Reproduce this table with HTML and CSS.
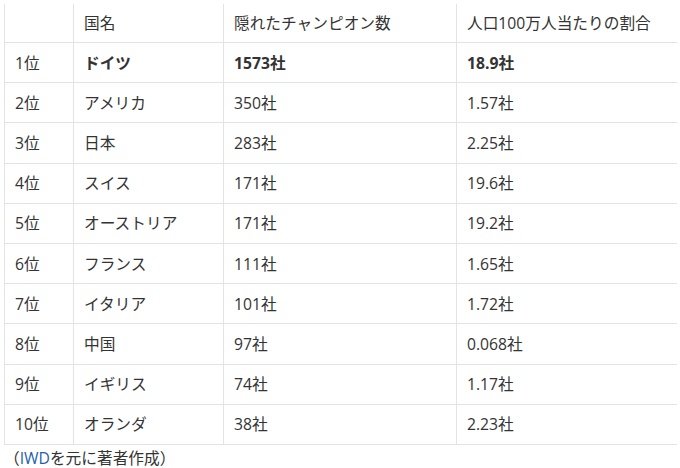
FILE: index.html
```html
<!DOCTYPE html>
<html lang="ja">
<head>
<meta charset="utf-8">
<link rel="stylesheet" href="styles.css">
</head>
<body>
<div class="wrap">
<table class="rank">
<thead>
<tr><th class="c1"></th><th class="c2">国名</th><th class="c3">隠れたチャンピオン数</th><th class="c4">人口100万人当たりの割合</th></tr>
</thead>
<tbody>
<tr class="bold"><td>1位</td><td>ドイツ</td><td>1573社</td><td>18.9社</td></tr>
<tr><td>2位</td><td>アメリカ</td><td>350社</td><td>1.57社</td></tr>
<tr><td>3位</td><td>日本</td><td>283社</td><td>2.25社</td></tr>
<tr><td>4位</td><td>スイス</td><td>171社</td><td>19.6社</td></tr>
<tr><td>5位</td><td>オーストリア</td><td>171社</td><td>19.2社</td></tr>
<tr><td>6位</td><td>フランス</td><td>111社</td><td>1.65社</td></tr>
<tr><td>7位</td><td>イタリア</td><td>101社</td><td>1.72社</td></tr>
<tr><td>8位</td><td>中国</td><td>97社</td><td>0.068社</td></tr>
<tr><td>9位</td><td>イギリス</td><td>74社</td><td>1.17社</td></tr>
<tr><td>10位</td><td>オランダ</td><td>38社</td><td>2.23社</td></tr>
</tbody>
</table>
<p class="note">（<span class="link">IWD</span>を元に著者作成）</p>
</div>
</body>
</html>
```
FILE: styles.css
```css
html, body {
  margin: 0;
  padding: 0;
  background: #fff;
}
body {
  font-family: "Open Sans", "Noto Sans CJK JP", sans-serif;
  color: #333;
  font-size: 15.7px;
}
.wrap {
  padding: 4px 0 0 4px;
}
.rank {
  border-collapse: collapse;
  width: 673px;
  table-layout: fixed;
}
.rank th, .rank td {
  border: 1px solid #e3e3e3;
  padding: 0 10px;
  text-align: left;
  font-weight: normal;
  height: 39.2px;
  line-height: 20px;
  white-space: nowrap;
}
.rank th {
  border-top: none;
  height: 38px;
}
.rank th:last-child, .rank td:last-child {
  border-right: none;
}
.c1 { width: 48px; }
.c2 { width: 129px; }
.c3 { width: 212px; }
.rank tr.bold td {
  font-weight: bold;
}
.rank tr.bold td:first-child {
  font-weight: normal;
}
.note {
  margin: 3px 0 0 0;
  line-height: 20px;
}
.link {
  color: #1d5fb0;
}
```
